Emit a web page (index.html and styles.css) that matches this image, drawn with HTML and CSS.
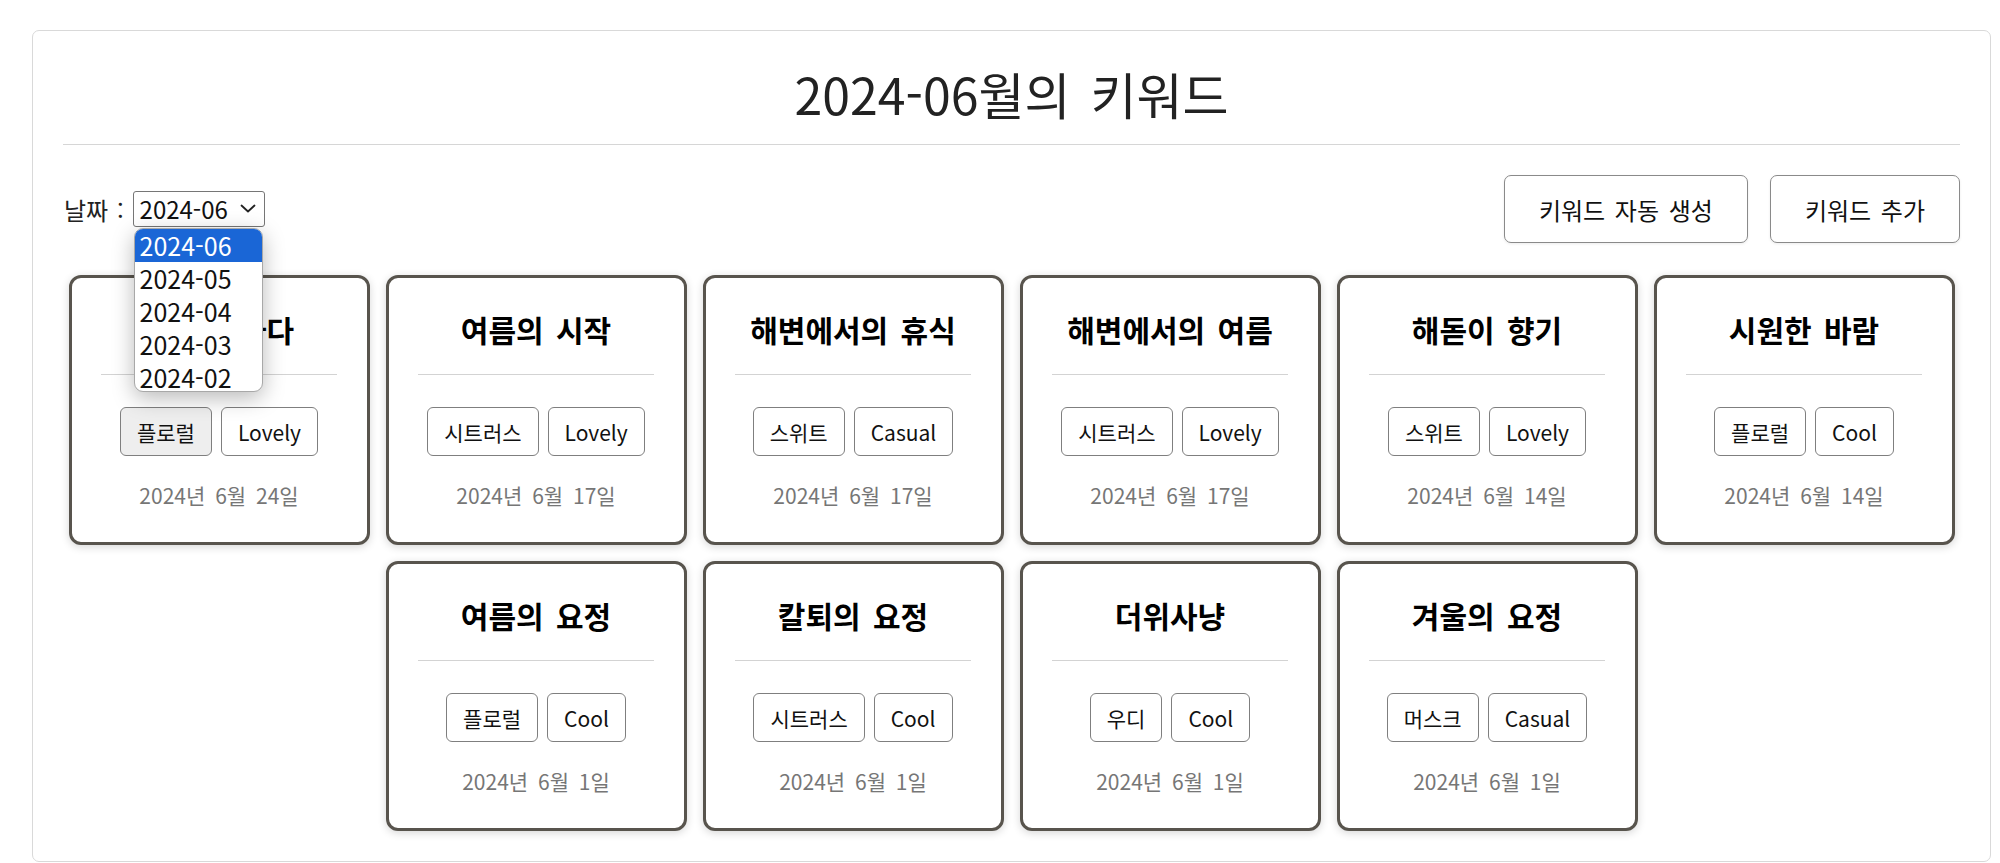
FILE: index.html
```html
<!DOCTYPE html>
<html lang="ko">
<head>
<meta charset="utf-8">
<title>2024-06월의 키워드</title>
<link rel="stylesheet" href="styles.css">
</head>
<body>
<div class="page">
  <main class="panel">
    <h1 class="page-title">2024-06월의 키워드</h1>
    <hr class="rule">
    <div class="toolbar">
      <div class="date-filter">
        <span class="date-label">날짜 :</span>
        <div class="select-wrap">
          <button class="select" type="button">
            <span>2024-06</span>
            <svg class="chevron" width="16" height="9" viewBox="0 0 16 9"><path d="M1.5 1.5 L8 7.5 L14.5 1.5" fill="none" stroke="#222" stroke-width="1.8" stroke-linecap="round" stroke-linejoin="round"/></svg>
          </button>
          <ul class="dropdown">
            <li class="option selected">2024-06</li>
            <li class="option">2024-05</li>
            <li class="option">2024-04</li>
            <li class="option">2024-03</li>
            <li class="option">2024-02</li>
          </ul>
        </div>
      </div>
      <div class="actions">
        <button class="action-btn" type="button">키워드 자동 생성</button>
        <button class="action-btn" type="button">키워드 추가</button>
      </div>
    </div>

    <section class="cards">
      <article class="card">
        <h3 class="card-title">여름의 바다</h3>
        <hr class="card-rule">
        <div class="tags"><button class="tag tag-hover">플로럴</button><button class="tag">Lovely</button></div>
        <p class="card-date">2024년 6월 24일</p>
      </article>
      <article class="card">
        <h3 class="card-title">여름의 시작</h3>
        <hr class="card-rule">
        <div class="tags"><button class="tag">시트러스</button><button class="tag">Lovely</button></div>
        <p class="card-date">2024년 6월 17일</p>
      </article>
      <article class="card">
        <h3 class="card-title">해변에서의 휴식</h3>
        <hr class="card-rule">
        <div class="tags"><button class="tag">스위트</button><button class="tag">Casual</button></div>
        <p class="card-date">2024년 6월 17일</p>
      </article>
      <article class="card">
        <h3 class="card-title">해변에서의 여름</h3>
        <hr class="card-rule">
        <div class="tags"><button class="tag">시트러스</button><button class="tag">Lovely</button></div>
        <p class="card-date">2024년 6월 17일</p>
      </article>
      <article class="card">
        <h3 class="card-title">해돋이 향기</h3>
        <hr class="card-rule">
        <div class="tags"><button class="tag">스위트</button><button class="tag">Lovely</button></div>
        <p class="card-date">2024년 6월 14일</p>
      </article>
      <article class="card">
        <h3 class="card-title">시원한 바람</h3>
        <hr class="card-rule">
        <div class="tags"><button class="tag">플로럴</button><button class="tag">Cool</button></div>
        <p class="card-date">2024년 6월 14일</p>
      </article>
      <article class="card">
        <h3 class="card-title">여름의 요정</h3>
        <hr class="card-rule">
        <div class="tags"><button class="tag">플로럴</button><button class="tag">Cool</button></div>
        <p class="card-date">2024년 6월 1일</p>
      </article>
      <article class="card">
        <h3 class="card-title">칼퇴의 요정</h3>
        <hr class="card-rule">
        <div class="tags"><button class="tag">시트러스</button><button class="tag">Cool</button></div>
        <p class="card-date">2024년 6월 1일</p>
      </article>
      <article class="card">
        <h3 class="card-title">더위사냥</h3>
        <hr class="card-rule">
        <div class="tags"><button class="tag">우디</button><button class="tag">Cool</button></div>
        <p class="card-date">2024년 6월 1일</p>
      </article>
      <article class="card">
        <h3 class="card-title">겨울의 요정</h3>
        <hr class="card-rule">
        <div class="tags"><button class="tag">머스크</button><button class="tag">Casual</button></div>
        <p class="card-date">2024년 6월 1일</p>
      </article>
    </section>
  </main>
</div>
</body>
</html>
```

FILE: styles.css
```css
* { box-sizing: border-box; }

html, body {
  margin: 0;
  padding: 0;
  background: #fff;
}

body {
  font-family: "Noto Sans CJK KR", "Noto Sans", sans-serif;
  color: #111;
}

.page {
  padding: 30px 10px 0 32px;
}

.panel {
  width: 1959px;
  border: 1px solid #d9d9d9;
  border-radius: 7px;
  padding: 33px 30px 30px;
}

.page-title {
  margin: 0;
  font-size: 50px;
  line-height: 58px;
  font-weight: 400;
  text-align: center;
  color: #222;
  word-spacing: 6px;
}

.rule {
  margin: 22px 0 0;
  border: 0;
  border-top: 1px solid #d6d6d6;
  height: 0;
}

.toolbar {
  margin-top: 30px;
  display: flex;
  justify-content: space-between;
  align-items: center;
  height: 68px;
}

.date-filter {
  display: flex;
  align-items: center;
  gap: 9px;
  font-size: 24px;
  color: #222;
}

.date-label {
  padding-left: 1px;
  word-spacing: 2px;
}

.select-wrap {
  position: relative;
}

.select {
  display: flex;
  align-items: center;
  justify-content: space-between;
  width: 132px;
  height: 36px;
  padding: 0 8px 0 6px;
  border: 1px solid #767676;
  border-radius: 3px;
  background: #fff;
  font-family: inherit;
  font-size: 24px;
  line-height: 34px;
  color: #111;
}

.chevron {
  flex: none;
  margin-top: -2px;
}

.dropdown {
  position: absolute;
  top: 37px;
  left: 1px;
  width: 129px;
  height: 164px;
  margin: 0;
  padding: 0;
  list-style: none;
  background: #fff;
  border: 1px solid #a8a8a8;
  border-radius: 9px;
  overflow: hidden;
  box-shadow: 0 6px 22px rgba(0, 0, 0, 0.28);
  z-index: 10;
}

.option {
  height: 33px;
  padding-left: 5px;
  font-size: 25px;
  line-height: 33px;
  color: #111;
}

.option.selected {
  background: #1a66d6;
  color: #fff;
}

.actions {
  display: flex;
  gap: 22px;
}

.action-btn {
  height: 68px;
  padding: 0 34px;
  border: 1px solid #8a8a8a;
  border-radius: 7px;
  background: #fff;
  font-family: inherit;
  font-size: 24px;
  color: #111;
  word-spacing: 3px;
  box-shadow: 0 1px 3px rgba(0, 0, 0, 0.08);
}

.cards {
  margin-top: 32px;
  display: flex;
  flex-wrap: wrap;
  justify-content: center;
  gap: 16px;
}

.card {
  width: 301px;
  height: 270px;
  border: 3px solid #58544d;
  border-radius: 12px;
  background: #fff;
  box-shadow: 0 2px 8px rgba(0, 0, 0, 0.16);
  padding-top: 33px;
  text-align: center;
}

.card-title {
  margin: 0;
  font-size: 30px;
  line-height: 36px;
  font-weight: 700;
  color: #000;
  word-spacing: 4px;
}

.card-rule {
  width: 236px;
  margin: 27px auto 0;
  border: 0;
  border-top: 1px solid #d3d3d3;
  height: 0;
}

.tags {
  margin-top: 32px;
  display: flex;
  justify-content: center;
  gap: 9px;
}

.tag {
  height: 49px;
  padding: 0 16px;
  border: 1px solid #7f7f7f;
  border-radius: 6px;
  background: #fff;
  font-family: inherit;
  font-size: 21px;
  color: #111;
}

.tag-hover {
  background: #eeeeee;
}

.card-date {
  margin: 24px 0 0;
  font-size: 21px;
  line-height: 30px;
  color: #767676;
  word-spacing: 4px;
}
```
